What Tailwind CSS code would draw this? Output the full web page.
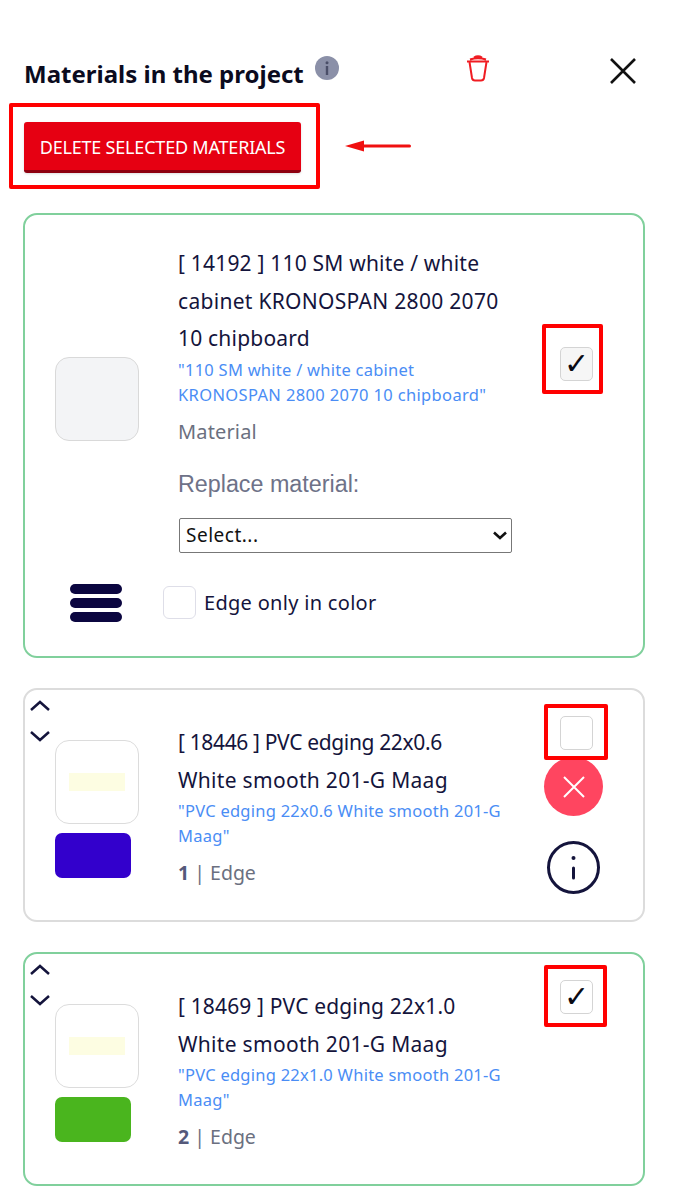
<!DOCTYPE html>
<html lang="en">
<head>
  <meta charset="UTF-8" />
  <meta name="viewport" content="width=device-width, initial-scale=1.0" />
  <title>Materials in the project</title>
  <script src="https://cdn.jsdelivr.net/npm/@tailwindcss/browser@4"></script>
</head>
<body class="bg-white font-['Noto_Sans',sans-serif] text-[#14143c]">
  <div class="relative w-[673px] h-[1202px] overflow-hidden pl-[23px] pr-[28px]">

    <!-- header -->
    <div class="flex items-start h-[122px] pt-[55px]">
      <h1 class="ml-[1px] text-[24px] leading-[38px] font-bold text-[#0b0b1e] w-[291px]">Materials in the project</h1>
      <svg class="mt-[1px] w-[24px] h-[24px]" viewBox="0 0 24 24"><circle cx="12" cy="12" r="12" fill="#8b90a8"/><rect x="10.8" y="10" width="2.4" height="9" fill="#4a4e68"/><circle cx="12" cy="6.8" r="1.5" fill="#4a4e68"/></svg>
      <svg class="-mt-[1px] ml-[126px] w-[26px] h-[28px]" viewBox="0 0 26 28" fill="none" stroke="#f01c22" stroke-width="2"><path d="M2 7.5h22M5 5.5 Q13 3 21 5.5M9 3.5 Q13 1 17 3.5"/><path d="M4.5 8 L7 24 Q7.5 26.5 10 26.5 H16 Q18.5 26.5 19 24 L21.5 8"/></svg>
      <svg class="mt-[2px] ml-[118px] w-[28px] h-[28px]" viewBox="0 0 28 28" fill="none" stroke="#111" stroke-width="2.6"><path d="M2 2 L26 26 M26 2 L2 26"/></svg>
    </div>

    <!-- delete button -->
    <div class="relative w-[278px] mb-[40px]">
      <button class="block ml-[1px] w-[277px] h-[51px] pt-[3px] bg-[#e60012] text-white text-[18px] tracking-[-0.2px] rounded-[3px] border-b-[3px] border-[#8e0010] shadow-sm">DELETE SELECTED MATERIALS</button>
      <div class="absolute left-[-14px] top-[-19px] w-[311px] h-[86px] border-[4px] border-[#ff0000] rounded-[2px]"></div>
      <svg class="absolute left-[321px] top-[14px] w-[68px] h-[20px]" viewBox="0 0 68 20"><rect x="16" y="8.5" width="51" height="3" rx="1.5" fill="#f01010"/><path d="M1 10 L20 4.5 L20 15.5 Z" fill="#f01010"/></svg>
    </div>

    <!-- card 1 -->
    <div class="border-2 border-[#80d09c] rounded-[14px] h-[445px] mb-[30px] pl-[30px] pt-[30px] flex flex-col">
      <div class="flex">
        <div class="w-[124px] shrink-0 pt-[112px]">
          <div class="w-[84px] h-[84px] bg-[#f3f4f6] border border-[#d9d9d9] rounded-[14px]"></div>
        </div>
        <div class="-ml-[1px] w-[338px] shrink-0">
          <p class="text-[21px] leading-[37.5px] tracking-[0.2px]">[ 14192 ] 110 SM white / white<br><span class="tracking-[0.3px]">cabinet KRONOSPAN 2800 2070</span><br>10 chipboard</p>
          <p class="text-[16.5px] leading-[25px] tracking-[0.25px] text-[#4a8df5] -mt-[1px]">"110 SM white / white cabinet<br><span class="tracking-[0.35px]">KRONOSPAN 2800 2070 10 chipboard"</span></p>
          <p class="text-[20px] leading-[26px] tracking-[0.15px] text-[#6b7080] mt-[12px]">Material</p>
          <p class="font-['Liberation_Sans',sans-serif] text-[23.3px] leading-[30px] text-[#6e7288] mt-[24px]">Replace material:</p>
          <div class="relative ml-[1px] mt-[19px] w-[333px]">
            <select class="block appearance-none w-[333px] h-[35px] bg-white border-[1.5px] border-[#777] rounded-[2px] text-[19px] tracking-[0.5px] text-[#111] pl-[6px]"><option>Select...</option></select>
            <svg class="absolute right-[5px] top-[13px] w-[14px] h-[9px]" viewBox="0 0 14 9" fill="none" stroke="#111" stroke-width="2.6"><path d="M1 1.5 L7 7 L13 1.5"/></svg>
          </div>
        </div>
        <div class="pl-[44px] pt-[102px]">
          <div class="relative w-[33px] h-[34px] bg-[#f6f6f6] border border-[#d4d4d4] rounded-[5px] flex items-center justify-center text-[30px] leading-none font-bold text-[#0a0a14] font-['DejaVu_Sans',sans-serif]">
            ✓
            <div class="absolute left-[-19px] top-[-24px] w-[61px] h-[70px] border-[4px] border-[#ff0000] rounded-[2px]"></div>
          </div>
        </div>
      </div>
      <div class="flex items-center mt-[31px]">
        <div class="ml-[15px] w-[52px] flex flex-col gap-[4px]">
          <div class="h-[10px] rounded-[5px] bg-[#0b0640]"></div>
          <div class="h-[10px] rounded-[5px] bg-[#0b0640]"></div>
          <div class="h-[10px] rounded-[5px] bg-[#0b0640]"></div>
        </div>
        <div class="ml-[41px] w-[33px] h-[33px] bg-white border border-[#dedee8] rounded-[6px]"></div>
        <span class="ml-[8px] text-[20px] leading-[30px] tracking-[0.3px] text-[#14143c]">Edge only in color</span>
      </div>
    </div>

    <!-- card 2 -->
    <div class="relative border-2 border-[#dcdcdc] rounded-[14px] h-[234px] mb-[30px] flex">
      <div class="w-[30px] shrink-0 pl-[5px] pt-[8px] flex flex-col gap-[14px]">
        <svg class="w-[20px] h-[16px]" viewBox="0 0 20 16" fill="none" stroke="#14143c" stroke-width="2.5"><path d="M1 12 L10 4 L19 12"/></svg>
        <svg class="w-[20px] h-[16px]" viewBox="0 0 20 16" fill="none" stroke="#14143c" stroke-width="2.5"><path d="M1 4 L10 12 L19 4"/></svg>
      </div>
      <div class="w-[124px] shrink-0 pt-[50px]">
        <div class="w-[84px] h-[84px] bg-white border border-[#dcdcdc] rounded-[14px] flex items-center justify-center">
          <div class="w-[56px] h-[18px] bg-[#fdfde2]"></div>
        </div>
        <div class="w-[76px] h-[45px] mt-[9px] bg-[#3300cc] rounded-[7px]"></div>
      </div>
      <div class="-ml-[1px] w-[338px] shrink-0 pt-[34px]">
        <p class="text-[21px] leading-[37.5px]"><span class="tracking-[-0.35px]">[ 18446 ] PVC edging 22x0.6</span><br><span class="tracking-[0.3px]">White smooth 201-G Maag</span></p>
        <p class="text-[16.5px] leading-[25px] tracking-[0.25px] text-[#4a8df5] -mt-[1px]">"PVC edging 22x0.6 White smooth 201-G<br>Maag"</p>
        <p class="text-[19.5px] leading-[26px] text-[#6b7080] mt-[12px]"><b class="text-[#55597a]">1</b> | Edge</p>
      </div>
      <div class="pl-[28px] pt-[26px] flex flex-col">
        <div class="relative ml-[16px] w-[33px] h-[34px] bg-white border border-[#d4d4d4] rounded-[5px]">
          <div class="absolute left-[-17px] top-[-13px] w-[64px] h-[56px] border-[4px] border-[#ff0000] rounded-[2px]"></div>
        </div>
        <div class="mt-[7px] w-[59px] h-[59px] rounded-full bg-[#ff4560] flex items-center justify-center">
          <svg class="w-[24px] h-[24px]" viewBox="0 0 24 24" fill="none" stroke="#fff" stroke-width="2"><path d="M2 2 L22 22 M22 2 L2 22"/></svg>
        </div>
        <svg class="mt-[25px] ml-[3px] w-[53px] h-[53px]" viewBox="0 0 53 53" fill="none" stroke="#14143c"><circle cx="26.5" cy="26.5" r="25" stroke-width="3"/><path d="M26.5 27 V37" stroke-width="3" stroke-linecap="round"/><circle cx="26.5" cy="17" r="2" fill="#14143c" stroke="none"/></svg>
      </div>
    </div>

    <!-- card 3 -->
    <div class="relative border-2 border-[#80d09c] rounded-[14px] h-[234px] flex">
      <div class="w-[30px] shrink-0 pl-[5px] pt-[8px] flex flex-col gap-[14px]">
        <svg class="w-[20px] h-[16px]" viewBox="0 0 20 16" fill="none" stroke="#14143c" stroke-width="2.5"><path d="M1 12 L10 4 L19 12"/></svg>
        <svg class="w-[20px] h-[16px]" viewBox="0 0 20 16" fill="none" stroke="#14143c" stroke-width="2.5"><path d="M1 4 L10 12 L19 4"/></svg>
      </div>
      <div class="w-[124px] shrink-0 pt-[50px]">
        <div class="w-[84px] h-[84px] bg-white border border-[#dcdcdc] rounded-[14px] flex items-center justify-center">
          <div class="w-[56px] h-[18px] bg-[#fdfde2]"></div>
        </div>
        <div class="w-[76px] h-[45px] mt-[9px] bg-[#4ab51e] rounded-[7px]"></div>
      </div>
      <div class="-ml-[1px] w-[338px] shrink-0 pt-[34px]">
        <p class="text-[21px] leading-[37.5px]"><span class="tracking-[0.15px]">[ 18469 ] PVC edging 22x1.0</span><br><span class="tracking-[0.3px]">White smooth 201-G Maag</span></p>
        <p class="text-[16.5px] leading-[25px] tracking-[0.25px] text-[#4a8df5] -mt-[1px]">"PVC edging 22x1.0 White smooth 201-G<br>Maag"</p>
        <p class="text-[19.5px] leading-[26px] text-[#6b7080] mt-[12px]"><b class="text-[#55597a]">2</b> | Edge</p>
      </div>
      <div class="pl-[44px] pt-[26px]">
        <div class="relative w-[33px] h-[34px] bg-white border border-[#d4d4d4] rounded-[5px] flex items-center justify-center text-[30px] leading-none font-bold text-[#0a0a14] font-['DejaVu_Sans',sans-serif]">
          ✓
          <div class="absolute left-[-17px] top-[-16px] w-[63px] h-[62px] border-[4px] border-[#ff0000] rounded-[2px]"></div>
        </div>
      </div>
    </div>

  </div>
</body>
</html>
